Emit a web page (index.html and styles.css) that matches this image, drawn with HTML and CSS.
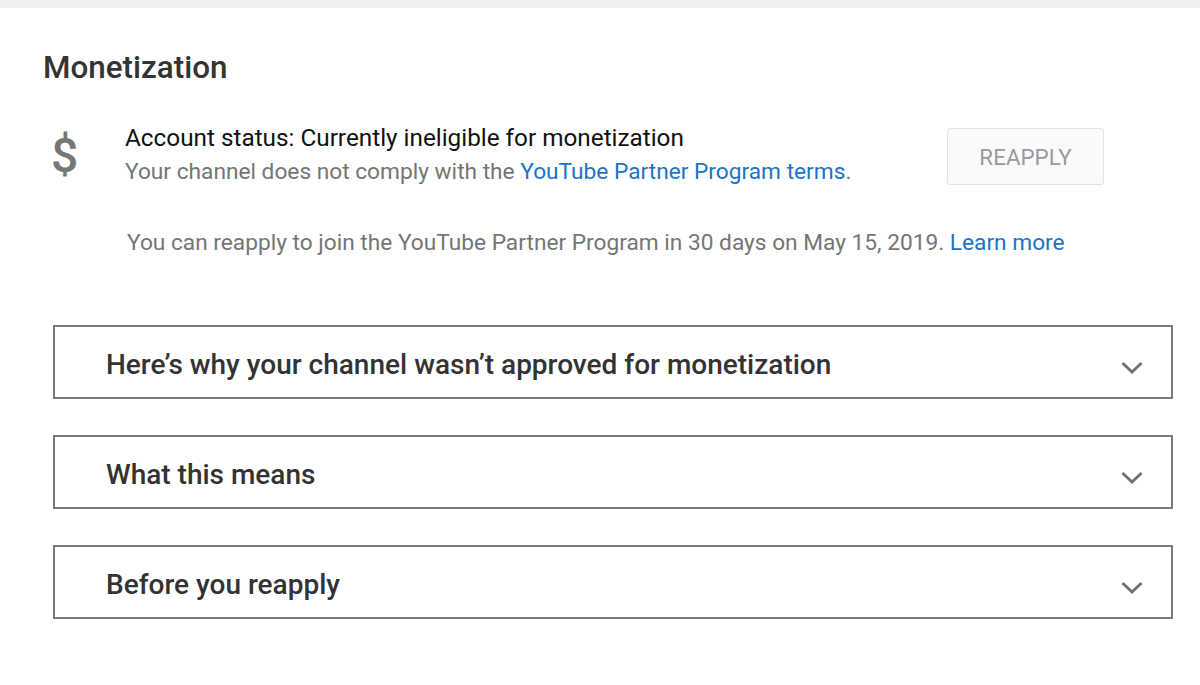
FILE: index.html
```html
<!DOCTYPE html>
<html>
<head>
<meta charset="utf-8">
<link rel="stylesheet" href="styles.css">
</head>
<body>
<div class="topbar"></div>
<main class="page">
  <h1 class="title">Monetization</h1>
  <section class="status">
    <div class="dollar">$</div>
    <div class="status-text">
      <div class="status-main">Account status: Currently ineligible for monetization</div>
      <div class="status-sub">Your channel does not comply with the <a class="link">YouTube Partner Program terms</a>.</div>
    </div>
    <button class="reapply">REAPPLY</button>
  </section>
  <p class="note">You can reapply to join the YouTube Partner Program in 30 days on May 15, 2019. <a class="link">Learn more</a></p>
  <div class="panels">
    <div class="panel">
      <span class="panel-title">Here’s why your channel wasn’t approved for monetization</span>
      <svg class="chev" viewBox="0 0 24 24" width="24" height="24"><path d="M2.5 7 L12 16 L21.5 7" fill="none" stroke="#737373" stroke-width="3"/></svg>
    </div>
    <div class="panel">
      <span class="panel-title">What this means</span>
      <svg class="chev" viewBox="0 0 24 24" width="24" height="24"><path d="M2.5 7 L12 16 L21.5 7" fill="none" stroke="#737373" stroke-width="3"/></svg>
    </div>
    <div class="panel">
      <span class="panel-title">Before you reapply</span>
      <svg class="chev" viewBox="0 0 24 24" width="24" height="24"><path d="M2.5 7 L12 16 L21.5 7" fill="none" stroke="#737373" stroke-width="3"/></svg>
    </div>
  </div>
</main>
</body>
</html>
```
FILE: styles.css
```css
html, body {
  margin: 0;
  padding: 0;
  background: #ffffff;
  font-family: Roboto, "Liberation Sans", sans-serif;
}
.topbar {
  height: 8px;
  background: #efefef;
}
.page {
  padding: 0 27px 0 43px;
}
.title {
  margin: 0;
  padding-top: 42px;
  font-size: 31.4px;
  font-weight: 500;
  color: #333333;
  line-height: 36px;
}
.status {
  display: flex;
  align-items: flex-start;
  margin-top: 35px;
}
.dollar {
  width: 82px;
  padding-left: 8px;
  box-sizing: border-box;
  font-size: 48px;
  font-weight: 500;
  line-height: 48px;
  color: #767676;
  margin-top: 11px;
}
.status-text {
  flex: 1;
}
.status-main {
  font-size: 24.3px;
  line-height: 34px;
  color: #111111;
}
.status-sub {
  font-size: 22.7px;
  line-height: 34px;
  color: #757575;
}
.link {
  color: #1b74c4;
  text-decoration: none;
}
.reapply {
  width: 157px;
  height: 57px;
  margin-top: 7px;
  margin-right: 69px;
  background: #fafafa;
  border: 1px solid #e2e2e2;
  border-radius: 3px;
  font-family: Roboto, "Liberation Sans", sans-serif;
  font-size: 22.4px;
  color: #9a9a9a;
}
.note {
  margin: 37px 0 0 84px;
  font-size: 22.7px;
  line-height: 34px;
  color: #757575;
}
.panels {
  display: flex;
  flex-direction: column;
  gap: 36px;
  margin: 65px 0 0 10px;
}
.panel {
  height: 74px;
  box-sizing: border-box;
  border: 2px solid #7a7a7a;
  display: flex;
  align-items: center;
  justify-content: space-between;
  padding: 4px 27px 0 51px;
}
.panel-title {
  font-size: 28px;
  font-weight: 500;
  color: #333333;
}
.chev {
  display: block;
  margin-top: 8px;
}
```
